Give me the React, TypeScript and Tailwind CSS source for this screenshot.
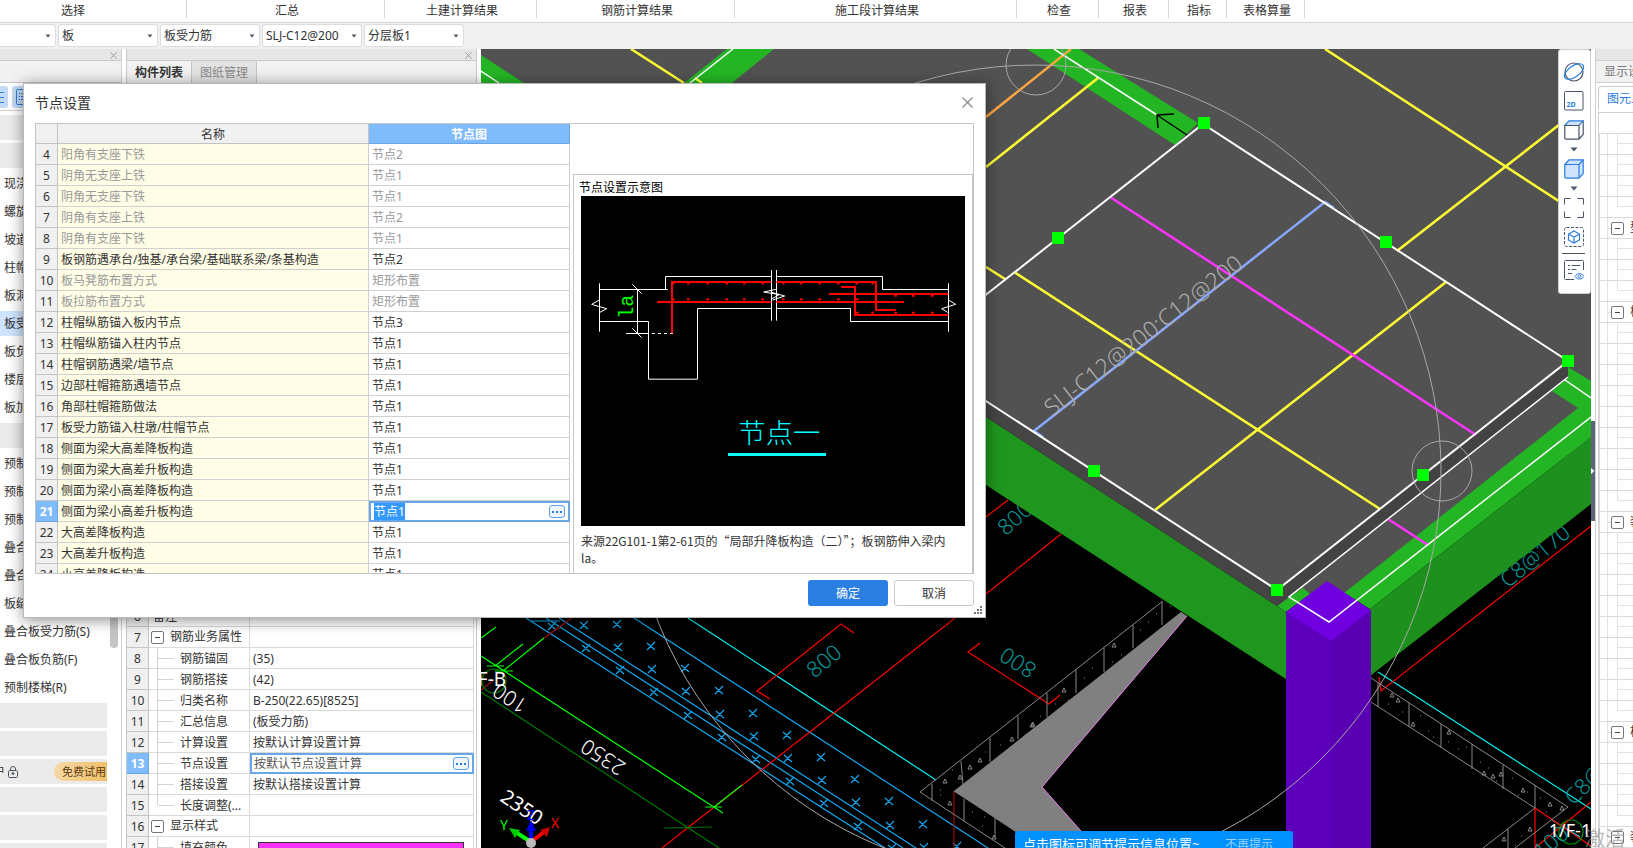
import React, { useEffect, useRef } from "react";

const RIBBON = [
  { name: "汇总", width: "w-[198px]" },
  { name: "土建计算结果", width: "w-[152px]" },
  { name: "钢筋计算结果", width: "w-[198px]" },
  { name: "施工段计算结果", width: "w-[282px]" },
  { name: "检查", width: "w-[82px]" },
  { name: "报表", width: "w-[70px]" },
  { name: "指标", width: "w-[58px]" },
  { name: "表格算量", width: "w-[78px]" },
];

const FILTERS = [
  { label: "构件类别", value: "板" },
  { label: "构件类型", value: "板受力筋" },
  { label: "构件", value: "SLJ-C12@200" },
  { label: "分层", value: "分层板1" },
];

const NAV_ITEMS = [
  "", "", "现浇", "螺旋", "坡道", "柱帽", "板洞", "板受", "板负", "楼层", "板加", "",
  "预制", "预制", "预制", "叠合", "叠合", "板缝",
  "叠合板受力筋(S)", "叠合板负筋(F)", "预制楼梯(R)",
  "", "", "户", "", "", "",
];

const NODE_ROWS = [
  { no: 4, name: "阳角有支座下铁", node: "节点2", off: true },
  { no: 5, name: "阴角无支座上铁", node: "节点1", off: true },
  { no: 6, name: "阴角无支座下铁", node: "节点1", off: true },
  { no: 7, name: "阴角有支座上铁", node: "节点2", off: true },
  { no: 8, name: "阴角有支座下铁", node: "节点1", off: true },
  { no: 9, name: "板钢筋遇承台/独基/承台梁/基础联系梁/条基构造", node: "节点2" },
  { no: 10, name: "板马凳筋布置方式", node: "矩形布置", off: true },
  { no: 11, name: "板拉筋布置方式", node: "矩形布置", off: true },
  { no: 12, name: "柱帽纵筋锚入板内节点", node: "节点3" },
  { no: 13, name: "柱帽纵筋锚入柱内节点", node: "节点1" },
  { no: 14, name: "柱帽钢筋遇梁/墙节点", node: "节点1" },
  { no: 15, name: "边部柱帽箍筋遇墙节点", node: "节点1" },
  { no: 16, name: "角部柱帽箍筋做法", node: "节点1" },
  { no: 17, name: "板受力筋锚入柱墩/柱帽节点", node: "节点1" },
  { no: 18, name: "侧面为梁大高差降板构造", node: "节点1" },
  { no: 19, name: "侧面为梁大高差升板构造", node: "节点1" },
  { no: 20, name: "侧面为梁小高差降板构造", node: "节点1" },
  { no: 21, name: "侧面为梁小高差升板构造", node: "节点1", active: true },
  { no: 22, name: "大高差降板构造", node: "节点1" },
  { no: 23, name: "大高差升板构造", node: "节点1" },
  { no: 24, name: "小高差降板构造", node: "节点1" },
];

const PROPERTIES = [
  { no: 6, name: "备注", value: "", kind: "plain" },
  { no: 7, name: "钢筋业务属性", value: "", kind: "group" },
  { no: 8, name: "钢筋锚固", value: "(35)", kind: "child" },
  { no: 9, name: "钢筋搭接", value: "(42)", kind: "child" },
  { no: 10, name: "归类名称", value: "B-250(22.65)[8525]", kind: "child" },
  { no: 11, name: "汇总信息", value: "(板受力筋)", kind: "child" },
  { no: 12, name: "计算设置", value: "按默认计算设置计算", kind: "child" },
  { no: 13, name: "节点设置", value: "按默认节点设置计算", kind: "child", active: true },
  { no: 14, name: "搭接设置", value: "按默认搭接设置计算", kind: "child" },
  { no: 15, name: "长度调整(...", value: "", kind: "last" },
  { no: 16, name: "显示样式", value: "", kind: "group" },
  { no: 17, name: "填充颜色", value: "swatch", kind: "child" },
];

// number of child rows above each group in the display tree
const DISPLAY_TREE = [
  { children: 4, group: "型" },
  { children: 3, group: "板" },
  { children: 9, group: "装" },
  { children: 9, group: "柱" },
  { children: 4, group: "装" },
];

function CloseIcon({ size }: { size: number }) {
  return (
    <svg width={size} height={size} viewBox="0 0 11 11" stroke="#8c8c8c" strokeWidth="1.3">
      <path d="M0.5 0.5 10.5 10.5M10.5 0.5 0.5 10.5" />
    </svg>
  );
}

function MoreButton({ label }: { label: string }) {
  return (
    <button
      aria-label={label}
      className="flex h-[13px] w-4 shrink-0 items-center justify-center gap-[2px] rounded-[3px] border border-[#5ba0ee] bg-[#eef5fd]"
    >
      <span className="size-[2px] bg-[#2b7de0]" />
      <span className="size-[2px] bg-[#2b7de0]" />
      <span className="size-[2px] bg-[#2b7de0]" />
    </button>
  );
}

function CollapseBox({ label }: { label: string }) {
  return (
    <button
      aria-label={label}
      className="flex size-[13px] shrink-0 items-center justify-center rounded-[2px] border border-[#777] bg-white"
    >
      <span className="h-px w-[5px] bg-[#444]" />
    </button>
  );
}

function Ribbon() {
  return (
    <nav className="flex h-[23px] shrink-0 border-b border-[#d4d4d4] bg-white">
      <div className="flex h-[18px] w-[187px] shrink-0 items-center justify-center border-r border-[#d9d9d9] pt-[3px] pr-10">
        选择
      </div>
      {RIBBON.map((r) => (
        <div
          key={r.name}
          className={`flex h-[18px] shrink-0 items-center justify-center border-r border-[#d9d9d9] pt-[3px] pl-[3px] ${r.width}`}
        >
          {r.name}
        </div>
      ))}
    </nav>
  );
}

function Picker({ label, value }: { label: string; value: string }) {
  return (
    <label className="relative block w-[100px] shrink-0">
      <select
        aria-label={label}
        className="h-[23px] w-full appearance-none rounded-[3px] border border-[#dcdcdc] bg-white pl-[3px] leading-[21px] outline-none"
      >
        <option>{value}</option>
      </select>
      <svg className="pointer-events-none absolute top-[10px] right-[5px]" width="6" height="4" viewBox="0 0 6 4" fill="#4b5563">
        <path d="M0.5 0.5h5L3 3.5z" />
      </svg>
    </label>
  );
}

function FilterBar() {
  return (
    <div className="flex h-[26px] shrink-0 gap-[2px] bg-[#f0f0f0] pt-px">
      <div className="-ml-11 flex shrink-0">
        <Picker label="楼层" value="" />
      </div>
      {FILTERS.map((f) => (
        <Picker key={f.label} label={f.label} value={f.value} />
      ))}
    </div>
  );
}

function PanelStrip() {
  return (
    <div className="flex h-3 shrink-0 items-center justify-end border-b border-[#c9c9c9] bg-[#e6e6e6] pt-px pr-1">
      <button aria-label="关闭面板">
        <CloseIcon size={7} />
      </button>
    </div>
  );
}

function NavPanel() {
  return (
    <aside className="flex w-[122px] shrink-0 flex-col overflow-hidden border-r border-[#d0d0d0] bg-white">
      <PanelStrip />
      <div className="h-[22px] shrink-0 border-b border-[#c9c9c9] bg-[#f1f1f1]" />
      <div className="flex h-7 shrink-0 items-center gap-1 border-b border-[#d0d0d0]">
        <button aria-label="列表" className="-ml-3 flex h-[22px] w-5 items-center justify-end rounded-[3px] bg-[#c4dbf5] pr-1">
          <svg width="8" height="12" viewBox="0 0 8 12" stroke="#2b7de0" strokeWidth="1">
            <path d="M0 1.5h8M0 6.5h8M0 11.5h8" />
          </svg>
        </button>
        <button aria-label="详情" className="flex h-[22px] w-5 items-center justify-center rounded-[3px] bg-[#c4dbf5]">
          <svg width="12" height="16" viewBox="0 0 12 16" fill="none" stroke="#2b7de0">
            <rect x="0.5" y="0.5" width="11" height="15" rx="1" />
            <path d="M3 4.5h1M5 4.5h4M3 7.5h1M5 7.5h4M3 10.5h1M5 10.5h4" />
          </svg>
        </button>
      </div>
      <div className="flex min-h-0 flex-1 pt-[4px]">
        <ul className="flex w-[107px] flex-col gap-[3px]">
          {NAV_ITEMS.map((item, i) => {
            if (item === "户") {
              return (
                <li key={i} className="flex h-[25px] shrink-0 items-center overflow-hidden bg-[#ebebeb]">
                  <span className="-ml-[7px] w-[15px] shrink-0">户</span>
                  <svg width="10" height="12" viewBox="0 0 10 12" fill="none" stroke="#4b5563">
                    <rect x="0.5" y="4.5" width="9" height="7" rx="1" />
                    <path d="M2.5 4.5V3a2.5 2.5 0 0 1 5 0v1.5M5 7v2" />
                    <circle cx="5" cy="7.5" r="1" />
                  </svg>
                  <span className="ml-auto h-[19px] w-[53px] rounded-l-full bg-linear-to-r from-[#f5d9a6] to-[#efbf68] pl-2 text-[11px] leading-[19px] whitespace-nowrap text-[#5c3a12]">
                    免费试用
                  </span>
                </li>
              );
            }
            return (
              <li
                key={i}
                className={`h-[25px] shrink-0 pl-1 leading-[25px] whitespace-nowrap ${
                  item === "" ? "bg-[#ebebeb]" : item === "板受" ? "bg-[#cfe5ff]" : ""
                }`}
              >
                {item}
              </li>
            );
          })}
        </ul>
        <div className="ml-[3px] h-[533px] w-2 rounded-full bg-[#c4c4c4]" />
      </div>
    </aside>
  );
}

function PropertyPanel() {
  return (
    <section className="ml-1 flex w-[351px] shrink-0 flex-col overflow-hidden border-x border-[#c9c9c9] bg-white">
      <PanelStrip />
      <div className="flex h-[22px] shrink-0 bg-[#f1f1f1]" role="tablist">
        <button role="tab" aria-selected="true" className="w-[65px] border-r border-[#c4c4c4] pt-[2px] font-bold">
          构件列表
        </button>
        <button role="tab" aria-selected="false" className="w-[65px] border-r border-[#c4c4c4] bg-[#e2e2e2] pt-[2px] text-[#888]">
          图纸管理
        </button>
      </div>
      <div className="h-[523px] shrink-0 border-t border-[#c9c9c9]" />
      <table className="w-[347px] table-fixed border-separate border-spacing-0">
        <colgroup>
          <col className="w-[22px]" />
          <col className="w-[101px]" />
          <col />
        </colgroup>
        <tbody>
          {PROPERTIES.map((p) => (
            <tr key={p.no} className="h-[21px]">
              <th
                scope="row"
                className={`border-r border-b p-0 pt-[2px] leading-[18px] ${
                  p.active
                    ? "border-[#68a6e8] bg-[#80bbfb] font-bold text-white"
                    : "border-[#c4c4c4] bg-[#f0f0f0] font-normal text-[#333]"
                }`}
              >
                {p.no}
              </th>
              <td className="border-r border-b border-[#dadada] p-0 leading-[22px] whitespace-nowrap">
                {p.kind === "plain" && <div className="h-5 pl-1">{p.name}</div>}
                {p.kind === "group" && (
                  <div className="flex h-5 items-center gap-[6px] pl-[2px]">
                    <CollapseBox label={`收起${p.name}`} />
                    {p.name}
                  </div>
                )}
                {(p.kind === "child" || p.kind === "last") && (
                  <div className="flex h-5 pl-2">
                    <div className={`w-px bg-[#d4d4d4] ${p.kind === "last" ? "h-[10px]" : "h-[21px]"}`} />
                    <div className="mt-[10px] mr-[6px] h-px w-4 bg-[#d4d4d4]" />
                    {p.name}
                  </div>
                )}
              </td>
              {p.active ? (
                <td className="border-2 border-[#68a6e8] p-0">
                  <div className="flex items-center pr-[3px] pl-[2px]">
                    <input
                      aria-label={p.name}
                      defaultValue={p.value}
                      className="h-[17px] w-full min-w-0 leading-[17px] text-[#555] outline-none"
                    />
                    <MoreButton label="打开节点设置" />
                  </div>
                </td>
              ) : (
                <td className="border-r border-b border-[#dadada] p-0 pt-[2px] pl-[3px] leading-[18px]">
                  {p.value === "swatch" ? (
                    <div className="mr-[9px] ml-[5px] h-[13px] border border-[#333] bg-[#ff33ff]" />
                  ) : (
                    p.value
                  )}
                </td>
              )}
            </tr>
          ))}
        </tbody>
      </table>
    </section>
  );
}

const HANDLES = [
  [1204, 123], [1058, 238], [1386, 242], [1568, 361], [1094, 471], [1423, 475], [1277, 590],
];

const HATCH_TICKS =
  "M1162 602v23M1133 625v23M1104 648v24M1076 670v23M1047 693v24M1018 716v23M990 738v24M961 761l2 24M932 784v17M964 799v22M995 818v20" +
  "M1378 683v24M1409 703v24M1441 724v24M1472 744v25M1503 765v24M1535 785v23M1508 829v19";

const STONES = [
  [945, 781], [960, 777], [970, 767], [980, 760], [950, 803], [1012, 739], [1033, 724], [1114, 645], [1032, 725],
  [994, 837], [1392, 695], [1398, 700], [1413, 724], [1484, 773], [1493, 776], [1501, 774], [1523, 790],
  [1550, 804], [1562, 808], [1530, 829], [1504, 839], [1449, 732], [1064, 690],
];

const SPECKS =
  "M940 790h1M952 770h1M985 752h1M1000 745h1M1008 750h1M1025 735h1M1040 716h1M1055 704h1M1068 700h1M1084 678h1M1092 668h1M1098 680h1M1112 662h1M1121 655h1M1140 630h1M1148 622h1M1156 614h1M1170 606h1M972 812h1M982 826h1M984 817h1M940 795h1M1388 704h1M1402 712h1M1420 716h1M1428 731h1M1433 737h1M1448 742h1M1458 749h1M1466 747h1M1480 762h1M1488 768h1M1496 781h1M1512 778h1M1518 795h1M1527 792h1M1540 798h1M1546 812h1M1521 836h1M1515 845h1";

function Model() {
  const crosses: string[] = [];
  for (let k = -1; k < 10; k++) {
    const dx = Math.round(34 * k);
    const dy = Math.round(22.2 * k);
    [[586, 648], [618, 647], [651, 646]].forEach(([x, y]) => {
      crosses.push(`M${x + dx - 4} ${y + dy - 3}l8 7m0 -8l-8 8`);
    });
  }
  return (
    <svg className="block h-full w-full" viewBox="481 49 1110 799" preserveAspectRatio="xMinYMin slice" fill="none">
      <rect x="481" y="49" width="1110" height="799" fill="#000" />
      <path d="M481 49H1591V440L1345 600 1277 606 900 350H481z" fill="#525252" />

      {/* drawing underlay */}
      <g stroke="#0fa8f0" strokeWidth="1.2">
        <path d="M634 618 988 848M559 618 916 848M546 618 903 848M526 618 885 848M530 621H560" />
        <path d={crosses.join("")} />
      </g>
      <g stroke="#00f0f0" strokeWidth="1.2">
        <path d="M688 618 936 780M1378 672 1591 809M1552 820 1580 837" />
      </g>
      <g stroke="#f00" strokeWidth="1.2">
        <path d="M955 618 662 848M770 699 757 691 841 624 854 633M980 643 968 652 1049 704 1060 695" />
        <path d="M1591 526 1381 691 1379 677M986 517 1008 500M1061 534 986 594M1535 808V848M1535 808 1591 846M1591 802 1535 848" />
        <path d="M954 791V848" stroke="#a00000" />
        <path d="M572 618 544 638M481 690 494 680" stroke="#a01010" />
      </g>
      <g stroke="#0f0" strokeWidth="1.2">
        <path d="M481 656 723 813M481 638 496 627M523 644 495 666M544 638 503 671M742 785 714 807M487 666H504M495 671H513M705 807H722" />
        <path d="M481 692 719 848M664 828 712 827" stroke="#007800" />
        <circle cx="494" cy="681" r="12" stroke="#007800" />
        <ellipse cx="1571" cy="832" rx="12" ry="12" stroke="#008a00" />
      </g>
      <g stroke="#888">
        <path d="M1163 601 920 792 1005 848M954 791 1016 831M1371 678 1568 807 1515 848M1371 702 1535 808 1483 848" />
        <path d={HATCH_TICKS} />
        <path d={SPECKS} />
        {STONES.map(([x, y], i) => (
          <path key={i} d={`M${x - 2} ${y + 2}l2 -4 2 4z`} />
        ))}
      </g>
      <path d="M1181 612 1187 616 1042 787 1096 848H1040L954 791z" fill="#808080" />
      <path d="M1187 616 1042 787 1096 848" stroke="#f07ff0" />

      <g fontFamily="'Noto Sans', sans-serif" fontWeight="300" textAnchor="middle">
        <g fill="#0a9696" fontSize="22">
          <text transform="translate(829 667) rotate(-40)">800</text>
          <text transform="translate(1022 656) rotate(212)">800</text>
          <text transform="translate(1020 524) rotate(-42)">800</text>
          <text transform="translate(1540 562) rotate(-40)">C8@170</text>
          <text transform="translate(1590 790) rotate(-45)">C8@</text>
          <text transform="translate(1556 848) rotate(-40)">100</text>
        </g>
        <g fill="#fff" fontSize="21">
          <text transform="translate(607 751) rotate(213)">2350</text>
          <text transform="translate(514 692) rotate(213)">100</text>
          <text transform="translate(518 813) rotate(34)" fontWeight="400" fontSize="20">2350</text>
          <text x="492" y="686" fontSize="19" fontWeight="400">F-B</text>
          <text x="1570" y="837" fontSize="18" fontWeight="400">1/F-1</text>
        </g>
      </g>

      {/* beams */}
      <g fill="#24b524">
        <path d="M481 55 524 83H481zM727 49H774L732 83H684z" />
        <path d="M1027 49H1079L1198 123 1175 145z" />
        <path d="M1568 367 1591 381V437L1370 609 1344 593 1578 408 1552 391 1568 378z" />
        <path d="M1277 606 1303 588 1310 594 1286 612z" />
      </g>
      <path d="M986 417 1277 606 1286 612V679L986 485z" fill="#1f971f" />
      <path d="M1591 437V504L1370 676V609z" fill="#1d901d" />

      {/* slab sides */}
      <path d="M912 353 1277 590V606L986 417 912 369z" fill="#454545" />
      <path d="M1277 590 1568 361V377L1277 606z" fill="#434343" />

      {/* column */}
      <path d="M1286 611H1331V848H1286z" fill="#5c00bc" />
      <path d="M1330 611H1371V848H1330z" fill="#5800b2" />
      <path d="M1327 581 1371 610 1331 641 1286 612z" fill="#7000e0" />

      <g stroke="#ffff33" strokeWidth="2.5">
        <path d="M631 49 684 83M695 78 702 83M1098 78 986 167M1325 49 1591 222M1591 100 1397 251M1446 282 1155 510M1014 272 1380 509M986 267 1005 279" />
        <path d="M1071 49 986 117" stroke="#ffa640" />
        <path d="M1110 197 1476 435M1388 519 1428 545" stroke="#ff33ff" />
        <path d="M1334 208 1325 202 1034 431 1043 437" stroke="#88a8ff" />
      </g>
      <g stroke="#fff" strokeWidth="2">
        <path d="M912 353 1203 124 1568 361 1277 590z" />
        <path d="M481 71 499 83M733 49 690 83M1054 49 1157 115" strokeWidth="1.5" />
        <path d="M1568 377 1289 597 1329 622 1591 417M1565 380 1591 398" strokeWidth="1.5" />
      </g>
      <path d="M1174 114 1157 115 1158 128M1157 115 1187 135" stroke="#000" strokeWidth="1.5" />

      <g stroke="#a8a8a8">
        <circle cx="1036" cy="65" r="30" />
        <circle cx="1442" cy="471" r="30" />
        <circle cx="1035" cy="471" r="406" />
      </g>

      <text
        transform="translate(1052 417) rotate(-38)"
        fill="#adadad"
        fontSize="23"
        fontWeight="300"
        fontFamily="'Noto Sans', sans-serif"
      >
        SLJ-C12@200:C12@200
      </text>

      <g fill="#0f0">
        {HANDLES.map(([x, y]) => (
          <rect key={x} x={x - 6} y={y - 6} width="12" height="12" />
        ))}
      </g>

      {/* axis gizmo */}
      <g strokeWidth="4">
        <path d="M531 842 517 833" stroke="#0f0" />
        <path d="M531 842 544 832" stroke="#f00" />
        <path d="M531 842V828" stroke="#00f" />
      </g>
      <path d="M509 828 520 830 515 838z" fill="#0c0" />
      <path d="M550 827 547 837 540 830z" fill="#c00" />
      <path d="M531 820 536 831H526z" fill="#00e" />
      <circle cx="531" cy="843" r="5" fill="#bbb" />
      <g fontFamily="'Noto Sans', sans-serif" fontSize="14" textAnchor="middle">
        <text x="504" y="830" fill="#0f0">Y</text>
        <text x="555" y="828" fill="#f00">X</text>
        <text x="531" y="820" fill="#00f">Z</text>
      </g>
    </svg>
  );
}

function Caret() {
  return (
    <svg className="my-[7px]" width="8" height="5" viewBox="0 0 8 5" fill="#4b5568">
      <path d="M0.5 0.5h7L4 4.5z" />
    </svg>
  );
}

function ViewTools() {
  const ink = "#4b5568";
  const blue = "#2b7de0";
  return (
    <div className="absolute top-0 right-0 flex w-[33px] flex-col items-center rounded-[3px] border border-[#d0d0d0] bg-white pt-3 pr-[2px] pb-[13px]">
      <button aria-label="动态观察" className="mb-[9px]">
        <svg width="22" height="20" viewBox="0 0 22 20" fill="none" strokeWidth="1.2">
          <circle cx="11" cy="10" r="9" stroke={ink} />
          <ellipse cx="11" cy="9.5" rx="11" ry="5.5" stroke={blue} transform="rotate(-35 11 9.5)" />
        </svg>
      </button>
      <button aria-label="二维" className="mb-[9px]">
        <svg width="20" height="20" viewBox="0 0 20 20" fill="none">
          <rect x="0.5" y="0.5" width="18.5" height="18.5" rx="1" stroke={ink} />
          <text x="2.5" y="16" fill={blue} fontSize="7" fontWeight="700" fontFamily="'Noto Sans', sans-serif">2D</text>
        </svg>
      </button>
      <button aria-label="视图方向">
        <svg width="20" height="20" viewBox="0 0 20 20" fill="none" strokeWidth="1.2">
          <path d="M0.8 5.5 5 0.8H19.2L15 5.5z" fill="#cfe2fb" stroke={blue} />
          <path d="M0.8 5.5H15V19.2H1.8a1 1 0 0 1-1-1zM19.2 1V14.5L15 19" stroke={ink} />
        </svg>
      </button>
      <Caret />
      <button aria-label="显示模式">
        <svg width="20" height="20" viewBox="0 0 20 20" strokeWidth="1.2" stroke={blue} fill="#cfe2fb">
          <path d="M0.8 5.5 5 0.8H19.2V14.5L15 19.2H1.8a1 1 0 0 1-1-1z" />
          <path d="M0.8 5.5H15V19M15 5.5 19.2 1" fill="none" />
        </svg>
      </button>
      <Caret />
      <button aria-label="全屏" className="mb-[9px]">
        <svg width="20" height="20" viewBox="0 0 20 20" fill="none" stroke={ink}>
          <path d="M0.5 6.5V0.5H6.5M13.5 0.5H19.5V6.5M19.5 13.5V19.5H13.5M6.5 19.5H0.5V13.5" />
        </svg>
      </button>
      <button aria-label="局部三维" className="mb-[6px]">
        <svg width="20" height="20" viewBox="0 0 20 20" fill="none">
          <rect x="0.5" y="0.5" width="19" height="19" rx="2" stroke={ink} strokeDasharray="3 1.5" />
          <path d="M10 4 15.5 7V13L10 16 4.5 13V7zM4.5 7 10 10 15.5 7M10 10V16" stroke={blue} strokeWidth="1.2" />
        </svg>
      </button>
      <div className="mb-[6px] h-px w-[23px] bg-[#555]" />
      <button aria-label="显示设置">
        <svg width="20" height="20" viewBox="0 0 20 20" fill="none" stroke={ink}>
          <path d="M10 19.5H1.5a1 1 0 0 1-1-1V1.5a1 1 0 0 1 1-1H18.5a1 1 0 0 1 1 1V10" />
          <path d="M4 5.500h2M7.500 5.500H16M4 9.500h2M7.500 9.500h5M4 13.500h4" />
          <path d="M11 16.500c2.500-4 6.500-4 9 0-2.500 3.500-6.500 3.500-9 0z" stroke={blue} />
          <circle cx="15.5" cy="16.3" r="1.4" stroke={blue} />
        </svg>
      </button>
    </div>
  );
}

function Viewport() {
  return (
    <main className="relative ml-1 min-w-0 flex-1 overflow-hidden bg-black">
      <Model />
      <ViewTools />
      <div className="absolute bottom-0 left-[534px] flex h-[17px] w-[278px] items-start justify-between overflow-hidden rounded-t-[3px] bg-[#0090ff] pt-[5px] pr-5 pl-2 text-[13px] leading-[17px] text-white">
        <span>点击图标可调节提示信息位置~</span>
        <button className="text-xs leading-[17px] text-[#9ad3ff]">不再提示</button>
      </div>
    </main>
  );
}

function DisplayPanel() {
  return (
    <aside className="relative flex w-[38px] shrink-0 flex-col overflow-hidden border-l border-[#d0d0d0] bg-white">
      <div className="h-3 shrink-0 border-b border-[#d0d0d0] bg-[#e6e6e6]" />
      <div className="h-[22px] shrink-0 border-b border-[#d0d0d0] bg-[#f1f1f1] pl-2 leading-[22px] whitespace-nowrap text-[#777]">
        显示设置
      </div>
      <button
        role="tab"
        className="mt-[3px] ml-[2px] h-6 shrink-0 rounded-tl-[4px] border-t border-l border-[#c9c9c9] pl-2 text-left leading-6 whitespace-nowrap text-[#2b7de0]"
      >
        图元显示
      </button>
      <div className="mt-[2px] ml-[2px] flex-1 border-t border-l border-[#d0d0d0]">
        <div className="h-[21px] border-b border-[#dadada]" />
        {DISPLAY_TREE.map((g, i) => (
          <div key={i} className="border-l border-[#dadada]">
            {Array.from({ length: g.children }, (_, n) => (
              <div key={n} className="flex h-[21px] border-b border-[#dadada]">
                <div className="w-2 shrink-0 border-r border-[#e2e2e2]" />
                <div className="w-[9px] shrink-0" />
                <div className={`w-px bg-[#e2e2e2] ${n === g.children - 1 ? "h-[10px]" : "h-[20px]"}`} />
                <div className="mt-[9px] h-px flex-1 bg-[#e2e2e2]" />
              </div>
            ))}
            <div className="flex h-[21px] items-center border-b border-[#dadada] whitespace-nowrap">
              <div className="h-full w-2 shrink-0 border-r border-[#e2e2e2]" />
              <div className="h-px w-[3px] shrink-0 bg-[#e2e2e2]" />
              <CollapseBox label="收起分组" />
              <span className="ml-[6px]">{g.group}</span>
            </div>
          </div>
        ))}
      </div>
    </aside>
  );
}

function NodeDiagram() {
  const topDots = [340, 385, 443, 500, 553, 608, 670, 724, 779, 835, 890, 938];
  const bottomDots = [340, 385, 443, 500, 553, 608, 670, 724, 779, 835, 892];
  const rightDots = [1007, 1060, 1117];
  return (
    <svg className="block w-full" viewBox="63 348 1152 990" fill="none" role="img" aria-label="节点一">
      <rect x="63" y="348" width="1152" height="990" fill="#000" />
      <g stroke="#fff" strokeWidth="3">
        <path d="M118.5 610V755M118 660 95 673 140 686 120 697" />
        <path d="M118 628.5H323M316.5 628V589.5H634M649 589.5H967.5V628.5H1165" />
        <path d="M118 724.5H265.5V897.5H412.5V685.5H634M649 685.5H871.5V724.5H1165" />
        <path d="M1165.5 610V755M1165 660 1187 673 1145 686 1163 697" />
        <path d="M634.5 570V722M649.5 570V722M648 628 611 636 658 644 636 656M632 636 674 648 638 660" />
        <path d="M232.5 628V760M198 760.5H265M217 613 245 641M217 745 245 773" />
        <path d="M276 760.5H340" strokeDasharray="9 9" />
      </g>
      <g stroke="#f00" strokeWidth="6">
        <path d="M333 606H634M649 606H948V690H1007M336 606V760M291 666H634M649 666H1032" />
        <path d="M843 621H885V705H1165M807 642H1165" />
        {topDots.map((x) => (
          <path key={x} d={`M${x - 4} 610h8`} />
        ))}
        {bottomDots.map((x) => (
          <path key={x} d={`M${x - 4} 658h8`} />
        ))}
        {rightDots.map((x) => (
          <path key={x} d={`M${x - 4} 647h8M${x - 4} 698h8`} />
        ))}
        <path d="M888 698h8M934 698h8" />
      </g>
      <text
        transform="translate(218 680) rotate(-90)"
        textAnchor="middle"
        fill="#0f0"
        fontSize="60"
        fontFamily="'Liberation Mono', monospace"
      >
        la
      </text>
      <text
        x="658"
        y="1090"
        textAnchor="middle"
        fill="#0ff"
        fontSize="82"
        fontWeight="300"
        fontFamily="'Noto Sans CJK SC', sans-serif"
      >
        节点一
      </text>
      <rect x="504" y="1119" width="294" height="9" fill="#0ff" />
    </svg>
  );
}

function NodeTable() {
  const editor = useRef<HTMLInputElement>(null);

  useEffect(() => {
    editor.current?.select();
  }, []);

  return (
    <table className="w-[534px] table-fixed border-separate border-spacing-0">
      <colgroup>
        <col className="w-[22px]" />
        <col className="w-[311px]" />
        <col className="w-[201px]" />
      </colgroup>
      <thead>
        <tr className="h-5">
          <th className="border-r border-b border-[#c4c4c4] bg-[#f0f0f0] p-0" aria-label="序号" />
          <th className="border-r border-b border-[#c4c4c4] bg-[#f0f0f0] p-0 pt-[2px] leading-[17px] font-normal">名称</th>
          <th className="border-r border-b border-[#68a6e8] bg-[#80bbfb] p-0 pt-[2px] leading-[17px] font-bold text-white">
            节点图
          </th>
        </tr>
      </thead>
      <tbody>
        {NODE_ROWS.map((r) => (
          <tr key={r.no} className={`h-[21px] ${r.off ? "text-[#999]" : "text-[#333]"}`}>
            <th
              scope="row"
              className={`border-r border-b p-0 pt-[2px] leading-[18px] ${
                r.active
                  ? "border-[#68a6e8] bg-[#80bbfb] font-bold text-white"
                  : "border-[#c4c4c4] bg-[#f0f0f0] font-normal text-[#333]"
              }`}
            >
              {r.no}
            </th>
            <td className="border-r border-b border-[#d0d0d0] bg-[#fffde6] p-0 pt-[2px] pl-[3px] leading-[18px]">{r.name}</td>
            {r.active ? (
              <td className="border-2 border-[#68a6e8] p-0">
                <div className="flex items-center pr-[3px] pl-[3px]">
                  <input
                    ref={editor}
                    aria-label={r.name}
                    defaultValue={r.node}
                    className="h-[17px] w-full min-w-0 leading-[17px] caret-transparent outline-none selection:bg-[#3399ff] selection:text-white"
                  />
                  <MoreButton label="选择节点图" />
                </div>
              </td>
            ) : (
              <td className="border-r border-b border-[#d0d0d0] p-0 pt-[2px] pl-[3px] leading-[18px]">{r.node}</td>
            )}
          </tr>
        ))}
      </tbody>
    </table>
  );
}

function NodeDialog() {
  return (
    <div
      role="dialog"
      aria-labelledby="node-dialog-title"
      className="absolute top-[83px] left-[23px] flex h-[535px] w-[963px] flex-col border border-[#b8b8b8] bg-white px-[11px] pb-[11px] shadow-[0_2px_14px_rgba(0,0,0,0.45)]"
    >
      <header className="mb-[2px] flex h-[37px] shrink-0 items-center justify-between pr-[1px]">
        <h1 id="node-dialog-title" className="text-sm">
          节点设置
        </h1>
        <button aria-label="关闭">
          <CloseIcon size={11} />
        </button>
      </header>
      <div className="flex min-h-0 flex-1 overflow-hidden border border-[#c4c4c4]">
        <div className="shrink-0 overflow-hidden">
          <NodeTable />
        </div>
        <section className="mt-[50px] ml-[3px] min-w-0 flex-1 border-t border-x border-[#c4c4c4] px-[7px] pt-1">
          <h2 className="-ml-[2px] leading-[17px] text-black">节点设置示意图</h2>
          <NodeDiagram />
          <p lang="zh-CN" className="pt-[6px] font-['Noto_Sans_CJK_SC',sans-serif] leading-[17px] text-[#333]">
            来源22G101-1第2-61页的“局部升降板构造（二）”；板钢筋伸入梁内la。
          </p>
        </section>
      </div>
      <footer className="mt-[6px] flex shrink-0 justify-end gap-[6px]">
        <button className="h-[26px] w-20 rounded-[3px] bg-[#2b7fe3] pt-px text-white">确定</button>
        <button className="h-[26px] w-20 rounded-[3px] border border-[#c9c9c9] bg-white pt-px">取消</button>
      </footer>
      <svg className="absolute right-[3px] bottom-[3px]" width="8" height="8" viewBox="0 0 8 8" fill="#777">
        <path d="M6 0h2v2H6zM3 3h2v2H3zM6 3h2v2H6zM0 6h2v2H0zM3 6h2v2H3zM6 6h2v2H6z" />
      </svg>
    </div>
  );
}

export default function App() {
  return (
    <div className="relative flex h-screen flex-col overflow-hidden bg-white font-['Noto_Sans','Noto_Sans_CJK_SC',sans-serif] text-xs text-[#333]">
      <Ribbon />
      <FilterBar />
      <div className="flex min-h-0 flex-1">
        <NavPanel />
        <PropertyPanel />
        <Viewport />
        <div className="flex w-1 shrink-0 flex-col pt-[372px]">
          <button aria-label="展开面板" className="flex h-[100px] w-1 items-center bg-[#5b6778]">
            <svg width="4" height="6" viewBox="0 0 4 6" fill="#fff">
              <path d="M0 0 3.5 3 0 6z" />
            </svg>
          </button>
        </div>
        <DisplayPanel />
      </div>
      <NodeDialog />
      <div className="pointer-events-none absolute right-2 bottom-0 h-[22px] text-xl leading-[26px] text-[#999]/70">激活</div>
    </div>
  );
}
